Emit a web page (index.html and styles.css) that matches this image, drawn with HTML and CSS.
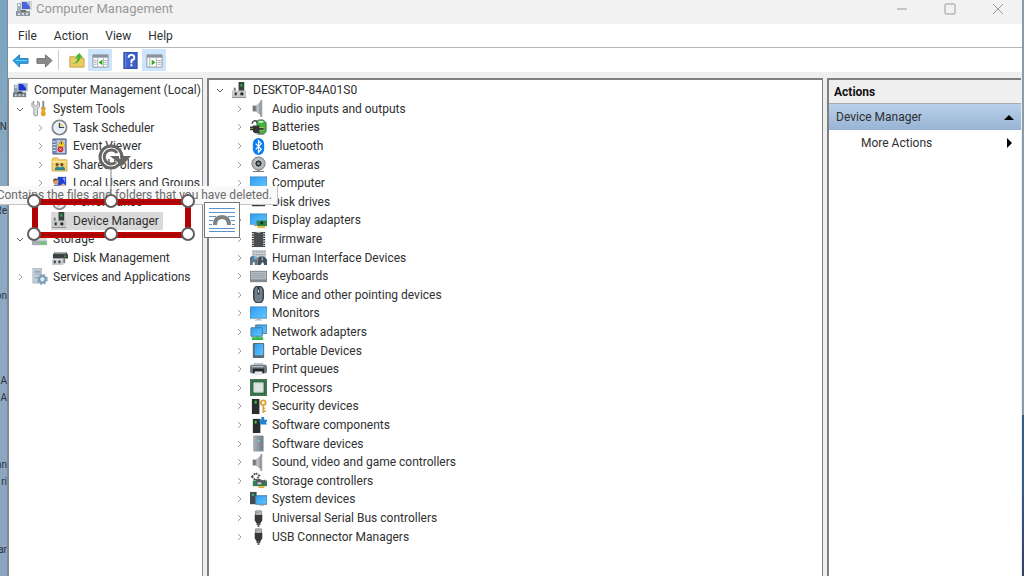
FILE: index.html
```html
<!DOCTYPE html>
<html lang="en">
<head>
<meta charset="utf-8">
<title>Computer Management</title>
<link rel="stylesheet" href="styles.css">
</head>
<body>
<svg class="sprite" aria-hidden="true">
  <defs>
    <linearGradient id="g-blue" x1="0" y1="0" x2="1" y2="1"><stop offset="0" stop-color="#2f9cf0"/><stop offset="1" stop-color="#62c8ff"/></linearGradient>
    <linearGradient id="g-steel" x1="0" y1="0" x2="1" y2="0"><stop offset="0" stop-color="#a9b3ba"/><stop offset="1" stop-color="#6f7a82"/></linearGradient>
    <linearGradient id="g-horn" x1="0" y1="0" x2="1" y2="0"><stop offset="0" stop-color="#666b70"/><stop offset=".6" stop-color="#c4c8cb"/><stop offset="1" stop-color="#777c80"/></linearGradient>
  </defs>
  <symbol id="i-mgmt" viewBox="0 0 18 18"><path d="M6 1h11v9H6z" fill="#c9cdbd"/><path d="M7 2h8v7H7z" fill="#1733d0"/><path d="M11 2h4v5z" fill="#86a5f5"/><path d="M2 3h4v9H2z" fill="#8fa0ac"/><path d="M3 4h2v2H3z" fill="#e4ecf0"/><path d="M1 11h14v5H1z" fill="#6f7c84"/><path d="M6 10h5v2H6z" fill="#3d474d"/><path d="M3 13h2v2H3zm4 0h2v2H7zm4 0h2v2h-2z" fill="#ccd5da"/></symbol>
  <symbol id="i-tools" viewBox="0 0 18 18"><path d="M3 1v4l2 2 2-2V1l2 2v4L7 9v7q-2 2-4 0V9L1 7V3z" fill="#d8dcde" stroke="#7d8488" stroke-width=".8"/><path d="M12 1h2v8h-2z" fill="#888"/><path d="M11 8h4v2l-1 1 1 2v3q-2 2-4 0v-3l1-2-1-1z" fill="#f2a41a" stroke="#bb7a10" stroke-width=".5"/></symbol>
  <symbol id="i-clock" viewBox="0 0 18 18"><circle cx="9" cy="9" r="7.500" fill="#e4edf5" stroke="#858b90" stroke-width="2"/><circle cx="9" cy="9" r="5.800" fill="none" stroke="#fff"/><path d="M9 4v5h5" fill="none" stroke="#33475c" stroke-width="1.300"/><path d="M10 5q3 0 3.500 3H10z" fill="#f0ce72"/></symbol>
  <symbol id="i-event" viewBox="0 0 18 18"><path d="M2 1h14v16H2z" fill="#7287b5" stroke="#55668d"/><path d="M6 2h9v14H6z" fill="#bac8e6"/><path d="M2 4h3M2 7h3M2 10h3M2 13h3" stroke="#eef2f9"/><path d="M11 2l4 7H7z" fill="#ffdc22" stroke="#b68900" stroke-width=".6"/><path d="M11 4v3" stroke="#222"/><circle cx="10" cy="12" r="3" fill="#d9242b"/><path d="M9 11l2 2m0-2l-2 2" stroke="#fff" stroke-width=".8"/></symbol>
  <symbol id="i-share" viewBox="0 0 18 18"><path d="M1 4l1-2h5l1 2h9v12H1z" fill="#f0d36f" stroke="#c89d34" stroke-width=".7"/><path d="M1 6h16" stroke="#fff0b0"/><circle cx="6.500" cy="9" r="1.700" fill="#6d4a32"/><circle cx="11.500" cy="9" r="1.700" fill="#6d4a32"/><path d="M4 15q0-4 3-4t3 4zM9 15q0-4 3-4t3 4z" fill="#2f8391"/></symbol>
  <symbol id="i-users" viewBox="0 0 18 18"><path d="M7 2h9v9H7z" fill="#1d43d3"/><path d="M12 3h3v5z" fill="#8eaaff"/><circle cx="5" cy="7" r="3" fill="#d69a6d"/><path d="M2 6q1-4 6-1z" fill="#584035"/><path d="M1 16q0-6 5-6t5 6z" fill="#7182a5"/><circle cx="13" cy="11" r="2" fill="#e7b68c"/><path d="M9 17q0-4 4-4t4 4z" fill="#d4bb6c"/></symbol>
  <symbol id="i-perf" viewBox="0 0 18 18"><circle cx="9" cy="9" r="7" fill="#eee" stroke="#8d8d8d" stroke-width="2"/><path d="M5 9l3 4 5-8" fill="none" stroke="#999"/></symbol>
  <symbol id="i-dev" viewBox="0 0 18 18"><path d="M8 0h6v10H8z" fill="#3a3f41"/><path d="M10 2h2v3h-2z" fill="#2bb546"/><path d="M3 6h2v5H3z" fill="#777"/><path d="M1 9h15v8H1z" fill="#c6c8ca"/><path d="M1 16h15v1H1z" fill="#8a8d90"/><path d="M4 11h2v3H4zm6 0h3v3h-3z" fill="#202427"/></symbol>
  <symbol id="i-storage" viewBox="0 0 18 18"><path d="M3 4h12l2 5H1z" fill="#d3d8da"/><path d="M1 9h16v6H1z" fill="#a5adb1"/><path d="M1 9h16v1H1z" fill="#eef2f2"/><path d="M10 12h5v2h-5z" fill="#4add45"/><path d="M2 2h6v3H2z" fill="#71889c"/></symbol>
  <symbol id="i-disk" viewBox="0 0 18 18"><path d="M4 2h12l2 3v4H2V5z" fill="#3c4144"/><path d="M4 2h12v2H3z" fill="#a7adaf"/><path d="M14 6h2v1h-2z" fill="#56e34f"/><path d="M1 10h12v6H1z" fill="#c8cccd"/><path d="M3 11h2v3H3zm5 0h2v3H8z" fill="#353a3d"/><path d="M13 9h2v5h-2z" fill="#777"/></symbol>
  <symbol id="i-services" viewBox="0 0 18 18"><path d="M2 0h9v16H2z" fill="#c2ced8" stroke="#9aaab6" stroke-width=".7"/><path d="M4 3h6v2H4zm0 3h6v1H4z" fill="#93a8b9"/><path d="M4 10h2v1H4z" fill="#4cc75a"/><circle cx="12" cy="12" r="3.500" fill="none" stroke="#7f9cb5" stroke-width="2.500"/><circle cx="12" cy="12" r="5" fill="none" stroke="#7f9cb5" stroke-width="1.500" stroke-dasharray="2 2"/><circle cx="12" cy="12" r="2" fill="#d8e9f5"/></symbol>
  <symbol id="i-audio" viewBox="0 0 18 18"><path d="M3 6h3l6-5v16l-6-5H3z" fill="url(#g-horn)"/><path d="M3 6h3v6H3z" fill="#74797d"/><path d="M12 0v18" stroke="#9da1a4" stroke-width="2"/></symbol>
  <symbol id="i-battery" viewBox="0 0 18 18"><path d="M7 3l2-2h5l3 3v9l-3 3H9z" fill="#3eb446" stroke="#357142"/><path d="M9 3h5" stroke="#c7efc1" stroke-width="2"/><path d="M2 5q2-5 6-2" fill="none" stroke="#444" stroke-width="1.500"/><path d="M3 7h7v2h4v3h-4v3H6q-3 0-3-3H0V8h3z" fill="#333739"/><path d="M10 9h5M10 12h4" stroke="#d5b544"/><path d="M0 10h3" stroke="#b9962a"/><path d="M7 16h8l2-2" stroke="#888" fill="none"/></symbol>
  <symbol id="i-bt" viewBox="0 0 18 18"><rect x="3" y="0" width="12" height="18" rx="6" fill="#087cf0"/><path d="M6 6l6 6-3 3V3l3 3-6 6" fill="none" stroke="#fff" stroke-width="1.300"/></symbol>
  <symbol id="i-camera" viewBox="0 0 18 18"><path d="M8 13h2v3h5v1H3v-1h5z" fill="#777b7e"/><circle cx="9" cy="8" r="7" fill="#b2b5b7" stroke="#767a7d"/><circle cx="9" cy="8" r="4" fill="#303538" stroke="#e0e0e0"/><circle cx="9" cy="8" r="1.500" fill="#92989c"/></symbol>
  <symbol id="i-computer" viewBox="0 0 18 18"><path d="M0 2h18v12H0z" fill="url(#g-blue)" stroke="#447fad" stroke-width=".8"/><path d="M7 14h4v2H7z" fill="#a9b3ba"/><path d="M5 16h8" stroke="#bcc5ca"/></symbol>
  <symbol id="i-drive" viewBox="0 0 18 18"><path d="M2 8l3-4h9l2 4v6H2z" fill="#34383a"/><path d="M10 12h4v1h-4z" fill="#44c353"/></symbol>
  <symbol id="i-display" viewBox="0 0 18 18"><path d="M0 2h18v11H0z" fill="url(#g-blue)" stroke="#447fad" stroke-width=".8"/><path d="M7 9h11v6H7z" fill="#318549"/><path d="M11 10h3v3h-3z" fill="#15352b"/><path d="M8 15h8v2H8z" fill="#e1bb38"/><path d="M4 13h3v2H4z" fill="#9aa5ad"/></symbol>
  <symbol id="i-firmware" viewBox="0 0 18 18"><path d="M4 1h10v16H4z" fill="#494d50"/><path d="M3 1v16M15 1v16" stroke="#2c2f31" stroke-width="2" stroke-dasharray="1.500 1"/><path d="M7 1h4v1H7z" fill="#bbb"/></symbol>
  <symbol id="i-hid" viewBox="0 0 18 18"><path d="M2 1h15v9H2z" fill="#c9d0d4"/><path d="M3 3h13M3 6h13" stroke="#85929a" stroke-dasharray="2 1"/><path d="M0 9q3-3 6 0h2v8H5v-3H3v3H0z" fill="#637584"/><path d="M8 10l2-2h5l3 3v6h-3l-1-3h-1l-2 3H8z" fill="#3f515f"/><path d="M4 8h3v3H4z" fill="#5bb1ea"/><circle cx="8" cy="11" r="1" fill="#e86c4d"/><path d="M13 9v3" stroke="#ddd"/></symbol>
  <symbol id="i-keyboard" viewBox="0 0 18 18"><path d="M0 3h18v12H0z" fill="#7e8990"/><path d="M1 4h16v8H1z" fill="#b5bec3"/><path d="M2 6h14M2 8h14M2 10h14" stroke="#8f9aa1" stroke-dasharray="1.500 .5"/></symbol>
  <symbol id="i-mouse" viewBox="0 0 18 18"><rect x="4" y="0" width="10" height="18" rx="5" fill="#72808b" stroke="#333b43" stroke-width="1.500"/><path d="M9 1v8" stroke="#28333c" stroke-width="2"/><path d="M9 4v3" stroke="#dce7ee"/></symbol>
  <symbol id="i-network" viewBox="0 0 18 18"><path d="M6 1h12v9H6z" fill="url(#g-blue)" stroke="#4c7798"/><path d="M1 4h12v9H1z" fill="url(#g-blue)" stroke="#4c7798"/><path d="M7 13h2v1h5v3H2v-3h5z" fill="#32b74b"/></symbol>
  <symbol id="i-portable" viewBox="0 0 18 18"><rect x="3" y="1" width="12" height="16" rx="1" fill="#596975"/><path d="M5 2h9v12H5z" fill="url(#g-blue)"/></symbol>
  <symbol id="i-printer" viewBox="0 0 18 18"><path d="M4 2h10v3H4z" fill="#c4cbd0"/><rect x="0" y="4" width="18" height="9" rx="2" fill="#727c83"/><path d="M3 8h12v5H3z" fill="#24292c"/><path d="M5 11h8v4H5z" fill="#e4e7e9"/><path d="M2 6h12" stroke="#c8d1d6"/></symbol>
  <symbol id="i-cpu" viewBox="0 0 18 18"><path d="M0 0h18v18H0z" fill="#2c6a4a"/><path d="M1 1h16v16H1z" fill="none" stroke="#8a9a6e" stroke-dasharray="1 1"/><path d="M4 4h10v10H4z" fill="#dfe5df" stroke="#bac8bd"/></symbol>
  <symbol id="i-security" viewBox="0 0 18 18"><path d="M2 1h8v16H2z" fill="#292e31"/><path d="M5 3h2v3H5z" fill="#39d34b"/><circle cx="14" cy="5" r="2.500" fill="none" stroke="#dda33c" stroke-width="2"/><path d="M14 7v9m0-2h3m-3-3h2" stroke="#dda33c" stroke-width="1.700"/></symbol>
  <symbol id="i-component" viewBox="0 0 18 18"><path d="M3 2h8v15H3z" fill="#292e31"/><path d="M5 4h2v3H5z" fill="#39d34b"/><path d="M10 3h2V0h3v3h3v2h-1v2h1v1h-7V6h-1z" fill="#2383cf"/></symbol>
  <symbol id="i-softdev" viewBox="0 0 18 18"><path d="M4 1h10v16H4z" fill="url(#g-steel)" stroke="#88949b" stroke-width=".8"/><circle cx="9" cy="6" r="1" fill="#52e6ef"/></symbol>
  <symbol id="i-stctl" viewBox="0 0 18 18"><path d="M2 5l4-4 4 3-4 5z" fill="none" stroke="#555b5e" stroke-width="2" stroke-dasharray="2 1"/><path d="M3 9h15v6H3z" fill="#348052"/><path d="M6 9l3-2 5 2 2-1v5H7z" fill="#515a5c"/><path d="M8 11h4v2H8z" fill="#d3d9d8"/><path d="M9 15h6v2H9z" fill="#e1aa32"/></symbol>
  <symbol id="i-system" viewBox="0 0 18 18"><path d="M0 1h7v13H0z" fill="#434c53"/><path d="M2 3h2v2H2z" fill="#34d451"/><path d="M6 5h12v9H6z" fill="url(#g-blue)" stroke="#477ca4"/><path d="M10 15h5" stroke="#999"/></symbol>
  <symbol id="i-usb" viewBox="0 0 18 18"><path d="M6 1h6v5H6z" fill="#d1d4d6" stroke="#777"/><path d="M7 3h1m1 0h1" stroke="#333"/><path d="M5 5h8v6l-2 3v2H7v-2l-2-3z" fill="#34383b"/><path d="M8 14h2v4H8z" fill="#666"/></symbol>
  <symbol id="chev-r" viewBox="0 0 12 12"><path d="M5 3l3 3-3 3" fill="none" stroke="#a2a2a2"/></symbol>
  <symbol id="chev-d" viewBox="0 0 12 12"><path d="M3 5l3 3 3-3" fill="none" stroke="#626262"/></symbol>
</svg>

<div class="desktop">
  <span class="crumb c1">N</span><span class="crumb c2">Re</span><span class="crumb c3">on</span><span class="crumb c4">A</span><span class="crumb c5">A</span><span class="crumb c6">an</span><span class="crumb c7">ri</span><span class="crumb c8">ar</span>

  <main class="window">
    <header class="titlebar">
      <svg class="icon faded"><use href="#i-mgmt"/></svg>
      <h1 class="title">Computer Management</h1>
      <button class="winbtn" aria-label="Minimize"><svg viewBox="0 0 12 12"><path d="M1 6h10"/></svg></button>
      <button class="winbtn" aria-label="Maximize"><svg viewBox="0 0 12 12"><rect x="1" y="1" width="10" height="10" rx="1"/></svg></button>
      <button class="winbtn" aria-label="Close"><svg viewBox="0 0 12 12"><path d="M1 1l10 10M11 1L1 11"/></svg></button>
    </header>
    <nav class="menubar">
      <button>File</button><button>Action</button><button>View</button><button>Help</button>
    </nav>
    <div class="toolbar">
      <button class="tool" aria-label="Back"><svg viewBox="0 0 18 18"><path d="M1 9l7-6v4h9v5H8v4z" fill="#2aa2e6" stroke="#2a78b5"/><path d="M4 9h12" stroke="#71cdf8"/></svg></button>
      <button class="tool" aria-label="Forward"><svg viewBox="0 0 18 18"><path d="M17 9l-7-6v4H1v5h9v4z" fill="#898989" stroke="#6e6e6e"/></svg></button>
      <span class="divider"></span>
      <button class="tool" aria-label="Up one level"><svg viewBox="0 0 18 18"><path d="M2 5h5l1 2h9v9H2z" fill="#ebcb64" stroke="#c9a03e"/><path d="M4 12q6 0 6-6H7l5-5 4 5h-3q-1 7-9 6z" fill="#48b52c"/></svg></button>
      <button class="tool on" aria-label="Show console tree"><svg viewBox="0 0 18 18"><path d="M1 3h16v13H1z" fill="#fff" stroke="#8b949c"/><path d="M1 3h16v3H1z" fill="#8b949c"/><path d="M6 6v10M12 6v10" stroke="#a6adb4"/><path d="M2 9h3M2 11h3M2 13h3M13 9h3M13 11h3M13 13h3" stroke="#a6adb4"/><path d="M11 8v6l-4-3z" fill="#30a921"/></svg></button>
      <button class="tool gap" aria-label="Help"><svg viewBox="0 0 18 18"><path d="M2 0h14v18H2z" fill="#3e60c8" stroke="#294398"/><path d="M4 1v16" stroke="#7895e3"/><path d="M7 6q0-3 3-3t3 3q0 2-3 3v3m0 1v2" fill="none" stroke="#fff" stroke-width="2"/></svg></button>
      <button class="tool on" aria-label="Show action pane"><svg viewBox="0 0 18 18"><path d="M1 3h16v13H1z" fill="#fff" stroke="#8b949c"/><path d="M1 3h16v3H1z" fill="#8b949c"/><path d="M4 6v10M11 6v10" stroke="#a6adb4"/><path d="M12 9h4M12 11h4M12 13h4" stroke="#a6adb4"/><path d="M6 8v6l4-3z" fill="#30a921"/></svg></button>
    </div>

    <div class="panes">
      <section class="pane console">
        <ul class="tree tree-console">
          <li class="row top"><svg class="icon"><use href="#i-mgmt"/></svg><span>Computer Management (Local)</span></li>
          <li class="row"><button class="arrow" aria-label="Collapse"><svg><use href="#chev-d"/></svg></button><svg class="icon"><use href="#i-tools"/></svg><span>System Tools</span></li>
          <li class="row sub"><button class="arrow" aria-label="Expand"><svg><use href="#chev-r"/></svg></button><svg class="icon"><use href="#i-clock"/></svg><span>Task Scheduler</span></li>
          <li class="row sub"><button class="arrow" aria-label="Expand"><svg><use href="#chev-r"/></svg></button><svg class="icon"><use href="#i-event"/></svg><span>Event Viewer</span></li>
          <li class="row sub"><button class="arrow" aria-label="Expand"><svg><use href="#chev-r"/></svg></button><svg class="icon"><use href="#i-share"/></svg><span>Shared Folders</span></li>
          <li class="row sub"><button class="arrow" aria-label="Expand"><svg><use href="#chev-r"/></svg></button><svg class="icon"><use href="#i-users"/></svg><span>Local Users and Groups</span></li>
          <li class="row sub"><button class="arrow" aria-label="Expand"><svg><use href="#chev-r"/></svg></button><svg class="icon"><use href="#i-perf"/></svg><span>Performance</span></li>
          <li class="row sub"><span class="arrow"></span><span class="selected"><svg class="icon"><use href="#i-dev"/></svg><span>Device Manager</span></span></li>
          <li class="row"><button class="arrow" aria-label="Collapse"><svg><use href="#chev-d"/></svg></button><svg class="icon"><use href="#i-storage"/></svg><span>Storage</span></li>
          <li class="row sub"><span class="arrow"></span><svg class="icon"><use href="#i-disk"/></svg><span>Disk Management</span></li>
          <li class="row"><button class="arrow" aria-label="Expand"><svg><use href="#chev-r"/></svg></button><svg class="icon"><use href="#i-services"/></svg><span>Services and Applications</span></li>
        </ul>
      </section>

      <section class="pane devices">
        <ul class="tree tree-devices">
          <li class="row"><button class="arrow" aria-label="Collapse"><svg><use href="#chev-d"/></svg></button><svg class="icon"><use href="#i-dev"/></svg><span>DESKTOP-84A01S0</span></li>
          <li class="row sub"><button class="arrow" aria-label="Expand"><svg><use href="#chev-r"/></svg></button><svg class="icon"><use href="#i-audio"/></svg><span>Audio inputs and outputs</span></li>
          <li class="row sub"><button class="arrow" aria-label="Expand"><svg><use href="#chev-r"/></svg></button><svg class="icon"><use href="#i-battery"/></svg><span>Batteries</span></li>
          <li class="row sub"><button class="arrow" aria-label="Expand"><svg><use href="#chev-r"/></svg></button><svg class="icon"><use href="#i-bt"/></svg><span>Bluetooth</span></li>
          <li class="row sub"><button class="arrow" aria-label="Expand"><svg><use href="#chev-r"/></svg></button><svg class="icon"><use href="#i-camera"/></svg><span>Cameras</span></li>
          <li class="row sub"><button class="arrow" aria-label="Expand"><svg><use href="#chev-r"/></svg></button><svg class="icon"><use href="#i-computer"/></svg><span>Computer</span></li>
          <li class="row sub"><button class="arrow" aria-label="Expand"><svg><use href="#chev-r"/></svg></button><svg class="icon"><use href="#i-drive"/></svg><span>Disk drives</span></li>
          <li class="row sub"><button class="arrow" aria-label="Expand"><svg><use href="#chev-r"/></svg></button><svg class="icon"><use href="#i-display"/></svg><span>Display adapters</span></li>
          <li class="row sub"><button class="arrow" aria-label="Expand"><svg><use href="#chev-r"/></svg></button><svg class="icon"><use href="#i-firmware"/></svg><span>Firmware</span></li>
          <li class="row sub"><button class="arrow" aria-label="Expand"><svg><use href="#chev-r"/></svg></button><svg class="icon"><use href="#i-hid"/></svg><span>Human Interface Devices</span></li>
          <li class="row sub"><button class="arrow" aria-label="Expand"><svg><use href="#chev-r"/></svg></button><svg class="icon"><use href="#i-keyboard"/></svg><span>Keyboards</span></li>
          <li class="row sub"><button class="arrow" aria-label="Expand"><svg><use href="#chev-r"/></svg></button><svg class="icon"><use href="#i-mouse"/></svg><span>Mice and other pointing devices</span></li>
          <li class="row sub"><button class="arrow" aria-label="Expand"><svg><use href="#chev-r"/></svg></button><svg class="icon"><use href="#i-computer"/></svg><span>Monitors</span></li>
          <li class="row sub"><button class="arrow" aria-label="Expand"><svg><use href="#chev-r"/></svg></button><svg class="icon"><use href="#i-network"/></svg><span>Network adapters</span></li>
          <li class="row sub"><button class="arrow" aria-label="Expand"><svg><use href="#chev-r"/></svg></button><svg class="icon"><use href="#i-portable"/></svg><span>Portable Devices</span></li>
          <li class="row sub"><button class="arrow" aria-label="Expand"><svg><use href="#chev-r"/></svg></button><svg class="icon"><use href="#i-printer"/></svg><span>Print queues</span></li>
          <li class="row sub"><button class="arrow" aria-label="Expand"><svg><use href="#chev-r"/></svg></button><svg class="icon"><use href="#i-cpu"/></svg><span>Processors</span></li>
          <li class="row sub"><button class="arrow" aria-label="Expand"><svg><use href="#chev-r"/></svg></button><svg class="icon"><use href="#i-security"/></svg><span>Security devices</span></li>
          <li class="row sub"><button class="arrow" aria-label="Expand"><svg><use href="#chev-r"/></svg></button><svg class="icon"><use href="#i-component"/></svg><span>Software components</span></li>
          <li class="row sub"><button class="arrow" aria-label="Expand"><svg><use href="#chev-r"/></svg></button><svg class="icon"><use href="#i-softdev"/></svg><span>Software devices</span></li>
          <li class="row sub"><button class="arrow" aria-label="Expand"><svg><use href="#chev-r"/></svg></button><svg class="icon"><use href="#i-audio"/></svg><span>Sound, video and game controllers</span></li>
          <li class="row sub"><button class="arrow" aria-label="Expand"><svg><use href="#chev-r"/></svg></button><svg class="icon"><use href="#i-stctl"/></svg><span>Storage controllers</span></li>
          <li class="row sub"><button class="arrow" aria-label="Expand"><svg><use href="#chev-r"/></svg></button><svg class="icon"><use href="#i-system"/></svg><span>System devices</span></li>
          <li class="row sub"><button class="arrow" aria-label="Expand"><svg><use href="#chev-r"/></svg></button><svg class="icon"><use href="#i-usb"/></svg><span>Universal Serial Bus controllers</span></li>
          <li class="row sub"><button class="arrow" aria-label="Expand"><svg><use href="#chev-r"/></svg></button><svg class="icon"><use href="#i-usb"/></svg><span>USB Connector Managers</span></li>
        </ul>
      </section>

      <aside class="pane actions">
        <h2 class="actions-title">Actions</h2>
        <button class="group"><span>Device Manager</span><svg viewBox="0 0 10 10"><path d="M0 8l5-5 5 5z"/></svg></button>
        <button class="more"><span>More Actions</span><svg viewBox="0 0 10 10"><path d="M3 0l5 5-5 5z"/></svg></button>
      </aside>
    </div>
  </main>

  <div class="tooltip" role="tooltip">Contains the files and folders that you have deleted.</div>

  <svg class="callout" viewBox="0 0 172 104" aria-hidden="true">
    <path d="M85 28v32" stroke="#888"/>
    <rect x="9" y="62" width="153" height="33" fill="none" stroke="#c00000" stroke-width="6"/>
    <rect x="9" y="62" width="153" height="33" fill="none" stroke="#7d1414" stroke-width="1"/>
    <g fill="#fff" stroke="#606060" stroke-width="2">
      <circle cx="8" cy="61" r="6"/><circle cx="85" cy="61" r="6"/><circle cx="162" cy="61" r="6"/>
      <circle cx="8" cy="94" r="6"/><circle cx="85" cy="94" r="6"/><circle cx="162" cy="94" r="6"/>
    </g>
    <circle cx="85" cy="17" r="8" fill="none" stroke="#fff" stroke-width="5"/>
    <circle cx="85" cy="17" r="11" fill="none" stroke="#666" stroke-width="3"/>
    <path d="M90 22A7 7 0 1 1 91 13" fill="none" stroke="#666" stroke-width="3"/>
    <path d="M84 16h21l-9 10z" fill="#666"/><path d="M91 13q3 2 3 6" fill="none" stroke="#fff"/>
  </svg>

  <button class="layout-options" aria-label="Layout options">
    <svg viewBox="0 0 28 28"><path d="M1 2.500h26M1 6.500h26M1 10.500h7m12 0h7M1 14.500h4m18 0h4M1 18.500h3m20 0h3M1 22.500h26M1 25.500h26" stroke="#5d93c9"/><path d="M7 19q0-8 7-8t7 8" fill="none" stroke="#808080" stroke-width="4"/></svg>
  </button>
</div>
</body>
</html>
```

FILE: styles.css
```css
* { box-sizing: border-box; }

body {
  margin: 0;
  font: 12px/18px Roboto, "Open Sans", sans-serif;
  color: #303030;
}

button {
  margin: 0;
  padding: 0;
  border: 0;
  background: none;
  font: inherit;
  color: inherit;
}

.sprite { position: absolute; width: 0; height: 0; }

.desktop {
  position: relative;
  display: flex;
  height: 100vh;
  overflow: hidden;
  padding: 0 2px 0 8px;
  background:
    linear-gradient(#8b9ca8 0 72%, #35598f 72% 85%, #343f63 100%) right / 2px 100% no-repeat,
    linear-gradient(#79a3c0, #8dabc4 40%, #8ba4c1);
}

.window {
  flex: 1;
  min-width: 0;
  display: flex;
  flex-direction: column;
  background: #efefef;
  box-shadow: -1px 0 #7d8b98;
}

.titlebar {
  display: flex;
  align-items: center;
  height: 24px;
  padding: 0 0 7px 7px;
  background: #f2f2f2;
}
.title {
  flex: 1;
  margin: 0 0 0 3px;
  font-size: 13px;
  font-weight: 400;
  color: #999;
}
.winbtn { width: 48px; height: 16px; display: grid; place-items: center; }
.winbtn svg { width: 12px; height: 12px; fill: none; stroke: #999; }

.icon { flex: none; width: 18px; height: 18px; }
.faded { opacity: .75; }

.menubar {
  display: flex;
  align-items: center;
  gap: 17px;
  height: 24px;
  padding: 1px 10px 0;
  background: #fff;
  border-bottom: 1px solid #b5b5bb;
}

.toolbar {
  display: flex;
  align-items: center;
  height: 24px;
  background: #fff;
}
.tool { display: grid; place-items: center; width: 24px; height: 22px; }
.tool svg { width: 17px; height: 17px; }
.tool.on { background: #cce5fa; }
.tool.gap { margin-left: 6px; }
.divider { width: 1px; height: 20px; margin: 0 5px 0 2px; background: #ccc; }

.panes {
  flex: 1;
  min-height: 0;
  display: grid;
  grid-template-columns: 195px 1fr 194px;
  gap: 4px;
  padding: 6px 1px 0 0;
}
.pane { background: #fff; min-width: 0; overflow: hidden; }
.console { border: solid #8a8a8a; border-width: 1px 1px 0 1px; }
.devices { border: solid #808080; border-width: 2px 1px 0 2px; }
.actions { border: solid #808080; border-width: 2px 0 0 2px; }

.tree {
  display: grid;
  grid-auto-rows: 1fr;
  margin: 0;
  padding: 0;
  list-style: none;
}
.tree-console { height: 205px; margin-top: 2px; }
.tree-devices { height: 465px; margin-top: 1px; }

.row {
  display: flex;
  align-items: center;
  min-height: 0;
  padding-left: 5px;
  white-space: nowrap;
}
.row.top { padding-left: 3px; }
.row.sub { padding-left: 25px; }
.tree-devices .sub { padding-left: 24px; }
.row .icon { width: 17px; height: 17px; margin-right: 5px; }

.arrow { flex: none; width: 12px; height: 12px; margin-right: 5px; }
.arrow svg { display: block; width: 12px; height: 12px; }

.selected {
  display: flex;
  align-items: center;
  padding-right: 4px;
  background: #d9d9d9;
}

.actions-title {
  margin: 0;
  padding: 3px 5px 2px;
  font-size: 12px;
  line-height: 18px;
  font-weight: 700;
  color: #111;
  background: #efefef;
  border-bottom: 1px solid #aaa;
}
.group, .more {
  display: flex;
  align-items: center;
  justify-content: space-between;
  width: 100%;
  padding: 4px 7px;
}
.group { background: linear-gradient(#b9d1ea, #98b3d3); }
.more { padding-left: 32px; }
.group svg, .more svg { width: 10px; height: 10px; fill: #000; }

.tooltip {
  position: absolute;
  left: 0;
  top: 186px;
  width: 278px;
  height: 19px;
  display: flex;
  justify-content: flex-end;
  overflow: hidden;
  padding-right: 5px;
  white-space: nowrap;
  color: #6b6b6b;
  background: #f9f9f9;
  border: solid #c4c4c4;
  border-width: 0 1px 1px 0;
}

.callout { position: absolute; left: 26px; top: 140px; width: 172px; height: 104px; }

.layout-options {
  position: absolute;
  left: 204px;
  top: 202px;
  width: 36px;
  height: 36px;
  display: grid;
  place-items: center;
  background: #fff;
  border: 1px solid #777;
}
.layout-options svg { width: 28px; height: 28px; }

/* Desktop labels that show past the window's left edge */
.crumb {
  position: absolute;
  left: 0;
  width: 7px;
  display: flex;
  justify-content: flex-end;
  overflow: hidden;
  font-size: 10px;
  line-height: 14px;
  color: #2c3238;
}
.c1 { top: 120px; }
.c2 { top: 204px; }
.c3 { top: 289px; }
.c4 { top: 374px; }
.c5 { top: 391px; }
.c6 { top: 458px; }
.c7 { top: 475px; }
.c8 { top: 543px; }
```
